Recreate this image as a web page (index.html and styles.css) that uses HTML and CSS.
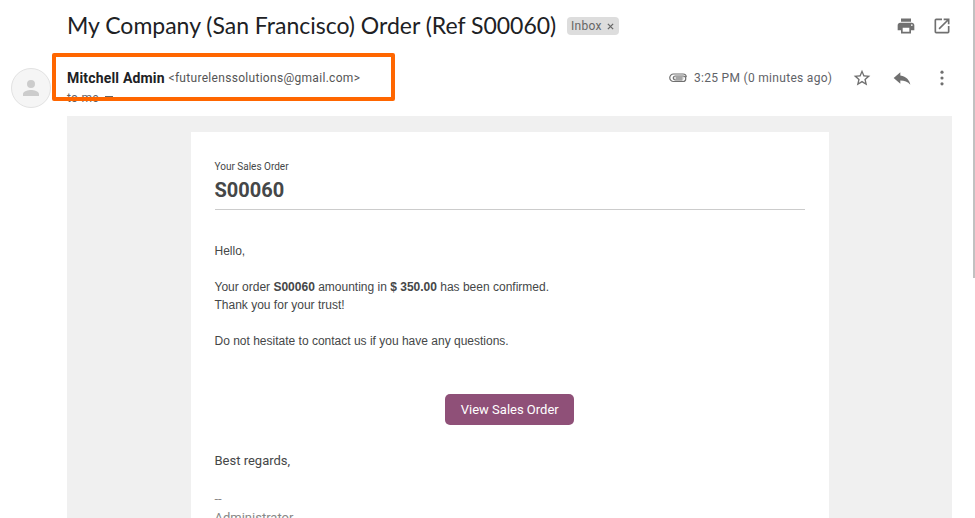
FILE: index.html
```html
<!DOCTYPE html>
<html lang="en">
<head>
<meta charset="utf-8">
<title>My Company (San Francisco) Order (Ref S00060)</title>
<link rel="stylesheet" href="styles.css">
</head>
<body>
<div class="mail">
  <header class="subject">
    <h1>My Company (San Francisco) Order (Ref S00060)</h1>
    <span class="label">Inbox <svg class="close" viewBox="0 0 8 8"><path d="M1 1l6 6M7 1L1 7"/></svg></span>
    <div class="tools">
      <svg class="icon" viewBox="0 0 24 24"><path d="M19 8H5c-1.660 0-3 1.340-3 3v6h4v4h12v-4h4v-6c0-1.660-1.340-3-3-3zm-3 11H8v-5h8v5zm3-7c-.55 0-1-.45-1-1s.45-1 1-1 1 .45 1 1-.45 1-1 1zM18 3H6v4h12V3z"/></svg>
      <svg class="icon" viewBox="0 0 24 24"><path d="M19 19H5V5h7V3H5a2 2 0 0 0-2 2v14a2 2 0 0 0 2 2h14a2 2 0 0 0 2-2v-7h-2v7zM14 3v2h3.590l-9.830 9.830 1.410 1.410L19 6.410V10h2V3h-7z"/></svg>
    </div>
  </header>
  <section class="sender">
    <div class="avatar"><svg viewBox="0 0 24 24"><path d="M12 12a4 4 0 1 0 0-8 4 4 0 0 0 0 8zm0 2c-2.670 0-8 1.340-8 4v2h16v-2c0-2.660-5.330-4-8-4z"/></svg></div>
    <div class="from">
      <div class="line"><strong>Mitchell Admin</strong><span class="address">&lt;futurelenssolutions@gmail.com&gt;</span></div>
      <div class="to">to me <i class="caret"></i></div>
      <div class="highlight"></div>
    </div>
    <div class="meta">
      <svg class="clip" viewBox="0 0 18 10"><rect class="fold" x="4" y="3" width="11" height="4" rx="2"/><path d="M7 5h6.500M13.500 7H6.300a2 2 0 0 1 0-4H14a2.200 2.200 0 0 1 0 5.500H4.500a3.750 3.750 0 0 1 0-7.500H14a3.300 3.300 0 0 1 3.300 3.300"/></svg>
      <span class="time">3:25 PM (0 minutes ago)</span>
      <svg class="icon" viewBox="0 0 24 24"><path d="M22 9.240l-7.190-.620L12 2 9.190 8.630 2 9.240l5.460 4.730L5.820 21 12 17.270 18.180 21l-1.630-7.030L22 9.240zM12 15.400l-3.760 2.270 1-4.280-3.320-2.880 4.380-.380L12 6.100l1.710 4.040 4.380.380-3.320 2.880 1 4.280L12 15.400z"/></svg>
      <svg class="icon" viewBox="0 0 24 24"><path d="M10 9V5l-8 7 8 7v-4.100c5 0 9 1.600 12 5.100-1-5-4.500-10-12-11z"/></svg>
      <svg class="icon" viewBox="0 0 24 24"><circle cx="12" cy="5" r="1.900"/><circle cx="12" cy="12" r="1.900"/><circle cx="12" cy="19" r="1.900"/></svg>
    </div>
  </section>
  <main class="backdrop">
    <article class="card">
      <div class="kicker">Your Sales Order</div>
      <h2>S00060</h2>
      <div class="message">
        <p>Hello,</p>
        <p>Your order <b>S00060</b> amounting in <b>$ 350.00</b> has been confirmed.<br>Thank you for your trust!</p>
        <p>Do not hesitate to contact us if you have any questions.</p>
      </div>
      <div class="action"><a class="button">View Sales Order</a></div>
      <div class="regards">Best regards,</div>
      <div class="signature">--<br>Administrator</div>
    </article>
  </main>
  <div class="scrollbar"></div>
</div>
</body>
</html>
```
FILE: styles.css
```css
* { box-sizing: border-box; }
body { margin: 0; background: #fff; font-family: Roboto, sans-serif; color: #454748; }
h1, h2, p { margin: 0; }
.mail { position: relative; height: 518px; overflow: hidden; }
.subject { display: flex; align-items: center; height: 52px; padding: 0 23px 0 67px; }
h1 { padding-bottom: 2px; font: 400 23px/28px Lato, sans-serif; color: #202124; white-space: nowrap; width: 500px; letter-spacing: -.01px; }
.label { display: flex; align-items: center; justify-content: space-between; width: 52px; height: 18px; padding: 0 5px 0 4px; border-radius: 4px; background: #ddd; color: #666; font-size: 12px; letter-spacing: .3px; }
.close { width: 7px; height: 7px; fill: none; stroke: #666; stroke-width: 1.500; }
.tools { display: flex; gap: 16px; margin-left: auto; }
.icon { width: 20px; height: 20px; fill: #707070; flex: none; }
.sender { display: flex; height: 64px; padding: 0 23px 0 11px; }
.avatar { display: flex; align-items: center; justify-content: center; width: 40px; height: 40px; margin-top: 16px; border: 1px solid #e2e2e2; border-radius: 50%; background: #f5f5f5; }
.avatar svg { width: 24px; height: 24px; fill: #ccc; }
.from { position: relative; margin-left: 16px; padding-top: 16px; }
.line { display: flex; align-items: center; height: 20px; white-space: nowrap; }
.line strong { width: 101.500px; font-size: 14px; color: #202124; letter-spacing: .18px; }
.address { font-size: 12px; color: #555; letter-spacing: .3px; }
.to { display: flex; align-items: center; height: 20px; font-size: 12px; color: #5f6368; letter-spacing: .3px; }
.caret { width: 8px; height: 1px; margin: 0 0 3px 6px; background: #666; }
.highlight { position: absolute; left: -15px; top: 1px; width: 343px; height: 48px; border: 4px solid #ff6600; border-radius: 2px; }
.meta { display: flex; align-items: center; height: 20px; margin: 16px 0 0 auto; }
.clip { width: 18px; height: 10px; margin-right: 7px; fill: none; stroke: #707070; stroke-width: 1.200; }
.fold { fill: #ddd; stroke: none; }
.time { width: 158px; font-size: 12px; letter-spacing: .3px; color: #5f6368; white-space: nowrap; }
.meta .icon + .icon { margin-left: 20px; }
.backdrop { margin: 0 23px 0 67px; height: 402px; padding-top: 16px; background: #f0f0f0; }
.card { width: 638px; height: 386px; margin-left: 124px; padding: 27px 24px 0 23.500px; background: #fff; overflow: hidden; }
.kicker { font-size: 10px; line-height: 16px; }
h2 { height: 35px; border-bottom: 1px solid #ccc; font: 700 20px/30px Roboto, sans-serif; }
.message { padding-top: 32px; font: 12px/18px "Liberation Sans", sans-serif; }
.message p { margin-bottom: 18px; }
.action { display: flex; justify-content: center; margin: 44px 1px 0 0; }
.button { width: 129px; height: 31px; padding-left: 1px; border-radius: 5px; background: #8f5078; color: #fff; font-size: 13px; line-height: 31px; text-align: center; white-space: nowrap; }
.regards { margin-top: 26px; font-size: 13px; line-height: 20px; }
.signature { margin-top: 18px; font-size: 13px; line-height: 19px; color: #888; }
.scrollbar { position: absolute; right: 0; top: 0; width: 2px; height: 278px; background: #c1c1c1; }
```
